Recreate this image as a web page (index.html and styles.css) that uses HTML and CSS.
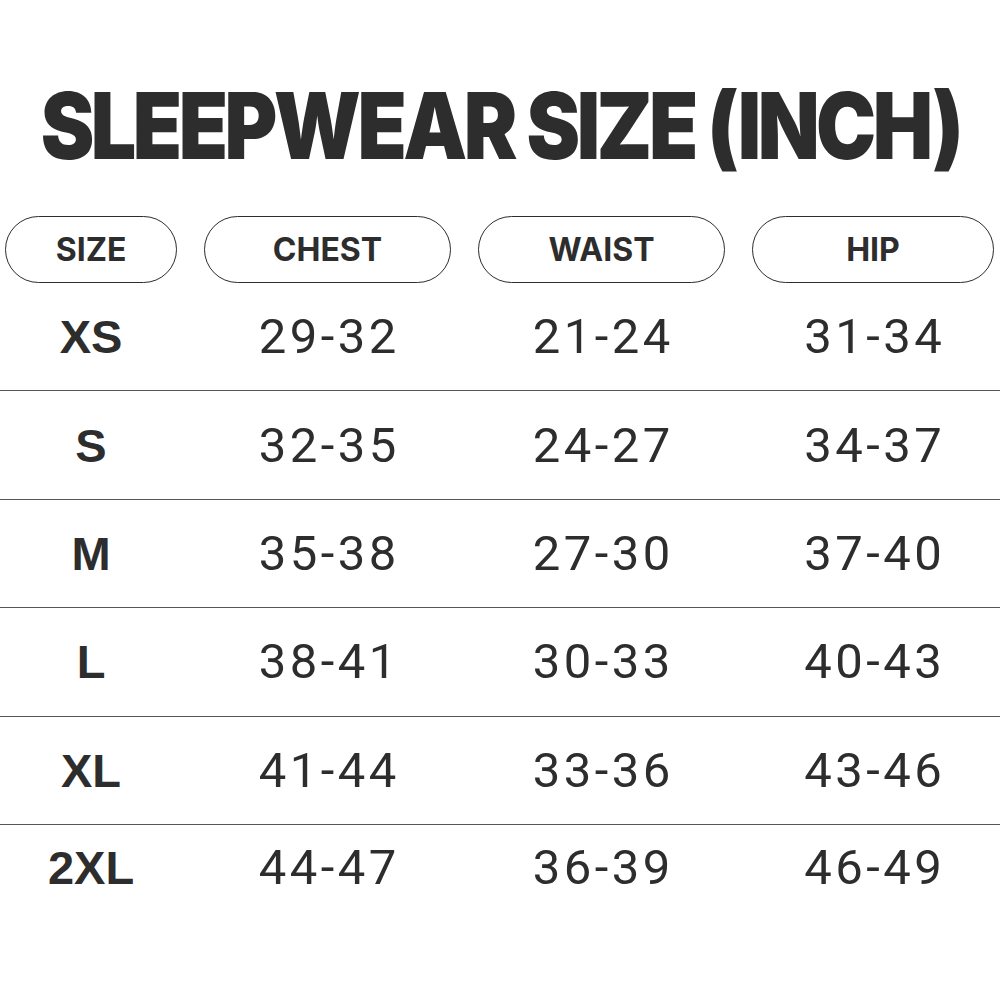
FILE: index.html
```html
<!DOCTYPE html>
<html lang="en">
<head>
<meta charset="utf-8">
<title>Sleepwear Size (Inch)</title>
<link rel="stylesheet" href="styles.css">
</head>
<body>
<div class="page">
  <h1 class="title"><span class="title-text">SLEEPWEAR SIZE (INCH)</span></h1>
  <div class="head">
    <div class="pill">SIZE</div>
    <div class="pill">CHEST</div>
    <div class="pill">WAIST</div>
    <div class="pill">HIP</div>
  </div>
  <div class="rows">
    <div class="row"><div class="size">XS</div><div class="num">29-32</div><div class="num">21-24</div><div class="num">31-34</div></div>
    <div class="row"><div class="size">S</div><div class="num">32-35</div><div class="num">24-27</div><div class="num">34-37</div></div>
    <div class="row"><div class="size">M</div><div class="num">35-38</div><div class="num">27-30</div><div class="num">37-40</div></div>
    <div class="row"><div class="size">L</div><div class="num">38-41</div><div class="num">30-33</div><div class="num">40-43</div></div>
    <div class="row"><div class="size">XL</div><div class="num">41-44</div><div class="num">33-36</div><div class="num">43-46</div></div>
    <div class="row last"><div class="size">2XL</div><div class="num">44-47</div><div class="num">36-39</div><div class="num">46-49</div></div>
  </div>
</div>
</body>
</html>
```

FILE: styles.css
```css
* { box-sizing: border-box; }
html, body { margin: 0; padding: 0; background: #ffffff; }
body { width: 1000px; height: 1000px; overflow: hidden; color: #2d2d2d; }

.page { display: flex; flex-direction: column; }

.title {
  margin: 80px 0 0 0;
  height: 92px;
  display: flex;
  justify-content: center;
  font-family: "Inter", "Liberation Sans", sans-serif;
  font-weight: 900;
  font-size: 92px;
  line-height: 92px;
  letter-spacing: -4px;
  white-space: nowrap;
  color: #2d2d2d;
}
.title-text {
  flex: none;
  display: block;
  transform: scaleX(0.875);
  transform-origin: 50% 0;
}

.head {
  margin-top: 44px;
  display: grid;
  grid-template-columns: 172px 247px 247px 242px;
  column-gap: 27px;
  padding: 0 6px 0 5px;
}

.pill {
  height: 67px;
  border: 1.5px solid #2d2d2d;
  border-radius: 34px;
  display: flex;
  align-items: center;
  justify-content: center;
  font-family: "Inter", "Liberation Sans", sans-serif;
  font-weight: 700;
  font-size: 32px;
  color: #2d2d2d;
}

.rows { display: flex; flex-direction: column; }

.row {
  height: 108.4px;
  display: grid;
  grid-template-columns: 172px 247px 247px 242px;
  column-gap: 27px;
  padding: 0 6px 0 5px;
  align-items: center;
  border-bottom: 1px solid #555555;
}
.row.last { border-bottom: none; height: 86px; }

.size {
  text-align: center;
  font-family: "Liberation Sans", Arial, sans-serif;
  font-weight: 700;
  font-size: 47px;
  color: #2d2d2d;
}

.num {
  text-align: center;
  font-family: "Roboto", "Liberation Sans", sans-serif;
  font-weight: 400;
  font-size: 49px;
  letter-spacing: 3.5px;
  text-indent: 3.5px;
  color: #2d2d2d;
}
```
